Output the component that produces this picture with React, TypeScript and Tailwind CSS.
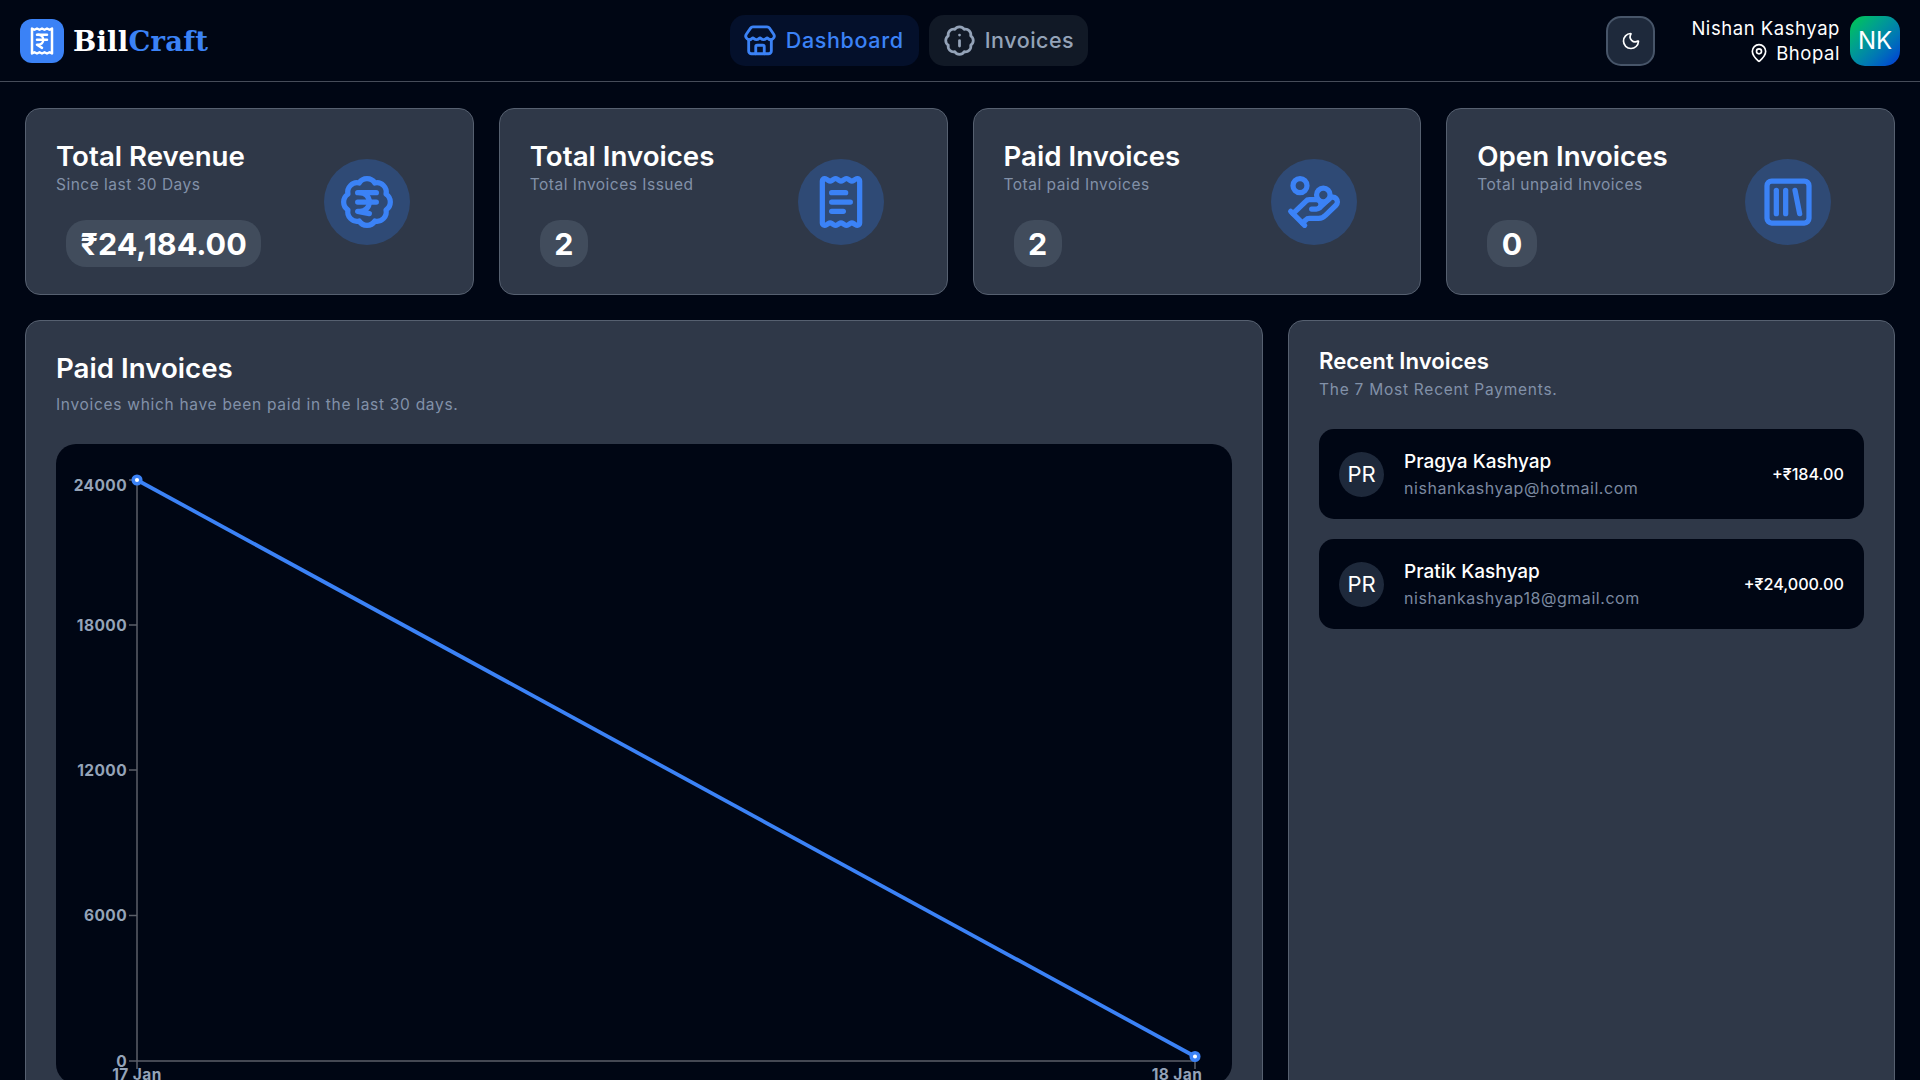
import {
  BadgeIndianRupee,
  BadgeInfo,
  HandCoins,
  MapPin,
  Moon,
  ReceiptIndianRupee,
  ReceiptText,
  SquareLibrary,
  Store,
} from "lucide-react";

const stats = [
  { title: "Total Revenue", sub: "Since last 30 Days", value: "₹24,184.00", icon: BadgeIndianRupee },
  { title: "Total Invoices", sub: "Total Invoices Issued", value: "2", icon: ReceiptText },
  { title: "Paid Invoices", sub: "Total paid Invoices", value: "2", icon: HandCoins },
  { title: "Open Invoices", sub: "Total unpaid Invoices", value: "0", icon: SquareLibrary },
];

const recent = [
  { name: "Pragya Kashyap", email: "nishankashyap@hotmail.com", amount: "+₹184.00" },
  { name: "Pratik Kashyap", email: "nishankashyap18@gmail.com", amount: "+₹24,000.00" },
];

// y is the tick, ty the label: the top label sits a little under its tick
const yTicks = [
  { label: "24000", y: 36, ty: 41 },
  { label: "18000", y: 181, ty: 181 },
  { label: "12000", y: 326, ty: 326 },
  { label: "6000", y: 471.5, ty: 471.5 },
  { label: "0", y: 617, ty: 617 },
];

function Chart() {
  return (
    <div className="mt-[29px] h-[640px] rounded-[20px] bg-[#000614]">
      <svg width="1176" height="636" className="font-['Inter',sans-serif]">
        <line x1="81" y1="36" x2="81" y2="625" stroke="#5b5f68" strokeWidth="1.5" />
        <line x1="81" y1="617" x2="1139" y2="617" stroke="#5b5f68" strokeWidth="1.5" />
        <line x1="1139" y1="617" x2="1139" y2="625" stroke="#5b5f68" strokeWidth="1.5" />
        {yTicks.map((t) => (
          <g key={t.label}>
            <line x1="73" y1={t.y} x2="81" y2={t.y} stroke="#5b5f68" strokeWidth="1.5" />
            <text
              x="71"
              y={t.ty}
              dy="5.5"
              textAnchor="end"
              fontSize="15.5"
              fontWeight="700"
              letterSpacing="0.4"
              fill="#94a3b8"
            >
              {t.label}
            </text>
          </g>
        ))}
        <text x="81" y="636" textAnchor="middle" fontSize="15.5" fontWeight="700" letterSpacing="0.4" fill="#94a3b8">
          17 Jan
        </text>
        <text x="1121" y="636" textAnchor="middle" fontSize="15.5" fontWeight="700" letterSpacing="0.4" fill="#94a3b8">
          18 Jan
        </text>
        <line x1="81" y1="36" x2="1139" y2="612.5" stroke="#3b82f6" strokeWidth="3.75" />
        {[
          [81, 36],
          [1139, 612.5],
        ].map(([cx, cy]) => (
          <circle key={cx} cx={cx} cy={cy} r="3.8" fill="#fff" stroke="#3b82f6" strokeWidth="3.5" />
        ))}
      </svg>
    </div>
  );
}

export default function App() {
  return (
    <div className="h-[1080px] overflow-hidden bg-[#000614] font-['Inter','Noto_Sans',sans-serif] text-white">
      <header className="flex h-[82px] items-center justify-between border-b-[1.5px] border-[#464c59] px-5">
        <div className="flex items-center gap-[9px] pr-[3px]">
          <div className="flex h-11 w-11 items-center justify-center rounded-xl bg-[#3b82f6]">
            <ReceiptIndianRupee size={30} strokeWidth={2} />
          </div>
          <span className="pt-[2px] font-['DejaVu_Serif',serif] text-[27.5px] font-bold tracking-[0.2px]">
            Bill<span className="text-[#3b82f6]">Craft</span>
          </span>
        </div>

        <nav className="flex gap-2.5">
          <a className="flex h-[51px] w-[189px] items-center gap-[9px] rounded-[15px] bg-[#04102b] pl-[13px] text-[21.5px] font-medium tracking-[0.65px] text-[#3b82f6]">
            <Store size={34} />
            Dashboard
          </a>
          <a className="flex h-[51px] w-[159px] items-center gap-[9px] rounded-[15px] bg-[#111926] pl-[14px] text-[21.5px] font-medium tracking-[0.5px] text-[#94a3b8]">
            <BadgeInfo size={33} />
            Invoices
          </a>
        </nav>

        <div className="flex items-center">
          <button className="mr-[36px] flex h-[50px] w-[49px] items-center justify-center rounded-[15px] border-2 border-[#475569] bg-[#1e293b]">
            <Moon size={20} />
          </button>
          <div className="mr-[10px] flex flex-col items-end text-[18.5px] leading-[24.5px] tracking-[0.55px]">
            <span>Nishan Kashyap</span>
            <span className="flex items-center gap-[7px]">
              <MapPin size={20} />
              Bhopal
            </span>
          </div>
          <div className="flex h-[50px] w-[50px] items-center justify-center rounded-[15px] bg-gradient-to-br from-[#06c941] to-[#1e2fd6] text-2xl">
            NK
          </div>
        </div>
      </header>

      <main className="px-[25px] pt-[26px]">
        <section className="grid grid-cols-4 gap-[25px]">
          {stats.map((s) => (
            <div
              key={s.title}
              className="flex h-[187px] items-center justify-between rounded-[15px] border border-[#566070] bg-[#2f3848] pr-[63px] pl-[30px]"
            >
              <div className="flex h-full flex-col">
                <h3 className="mt-[29px] text-[27.7px] leading-9 font-semibold">{s.title}</h3>
                <p className="mt-px text-[15.5px] leading-5 tracking-[0.5px] text-[#8291a8]">{s.sub}</p>
                <div className="mt-[24.5px] ml-2.5 self-start rounded-[20px] bg-[#414c5c] px-[14.5px] text-[30.5px] leading-[47px] font-bold">
                  {s.value}
                </div>
              </div>
              <div className="flex h-[86px] w-[86px] items-center justify-center rounded-full bg-[#2f4a75] text-[#3b82f6]">
                <s.icon size={56} strokeWidth={2.25} />
              </div>
            </div>
          ))}
        </section>

        <section className="mt-[25px] grid grid-cols-[1238px_607px] gap-[25px]">
          <div className="h-[900px] rounded-[15px] border border-[#566070] bg-[#2f3848] px-[30px] pt-[29px]">
            <h2 className="text-[27.7px] leading-9 font-semibold">Paid Invoices</h2>
            <p className="mt-[9px] text-[15.5px] leading-5 tracking-[0.7px] text-[#8291a8]">
              Invoices which have been paid in the last 30 days.
            </p>
            <Chart />
          </div>

          <div className="h-[900px] rounded-[15px] border border-[#566070] bg-[#2f3848] px-[30px] pt-[26px]">
            <h2 className="text-[22.2px] leading-7 font-semibold">Recent Invoices</h2>
            <p className="mt-[5px] text-[15.5px] leading-5 tracking-[0.75px] text-[#8291a8]">
              The 7 Most Recent Payments.
            </p>
            <div className="mt-[29px] flex flex-col gap-5">
              {recent.map((r) => (
                <div key={r.email} className="flex h-[90px] items-center rounded-[15px] bg-[#000614] px-5">
                  <div className="flex h-[45px] w-[45px] items-center justify-center rounded-full bg-[#1e293b] text-[22px]">
                    PR
                  </div>
                  <div className="mt-[2px] ml-5 flex flex-col">
                    <span className="text-[19px] leading-[26px] font-medium">{r.name}</span>
                    <span className="text-[16px] leading-[26px] tracking-[0.55px] text-[#7b89a0]">{r.email}</span>
                  </div>
                  <span className="ml-auto text-[16.2px] font-medium">{r.amount}</span>
                </div>
              ))}
            </div>
          </div>
        </section>
      </main>
    </div>
  );
}
